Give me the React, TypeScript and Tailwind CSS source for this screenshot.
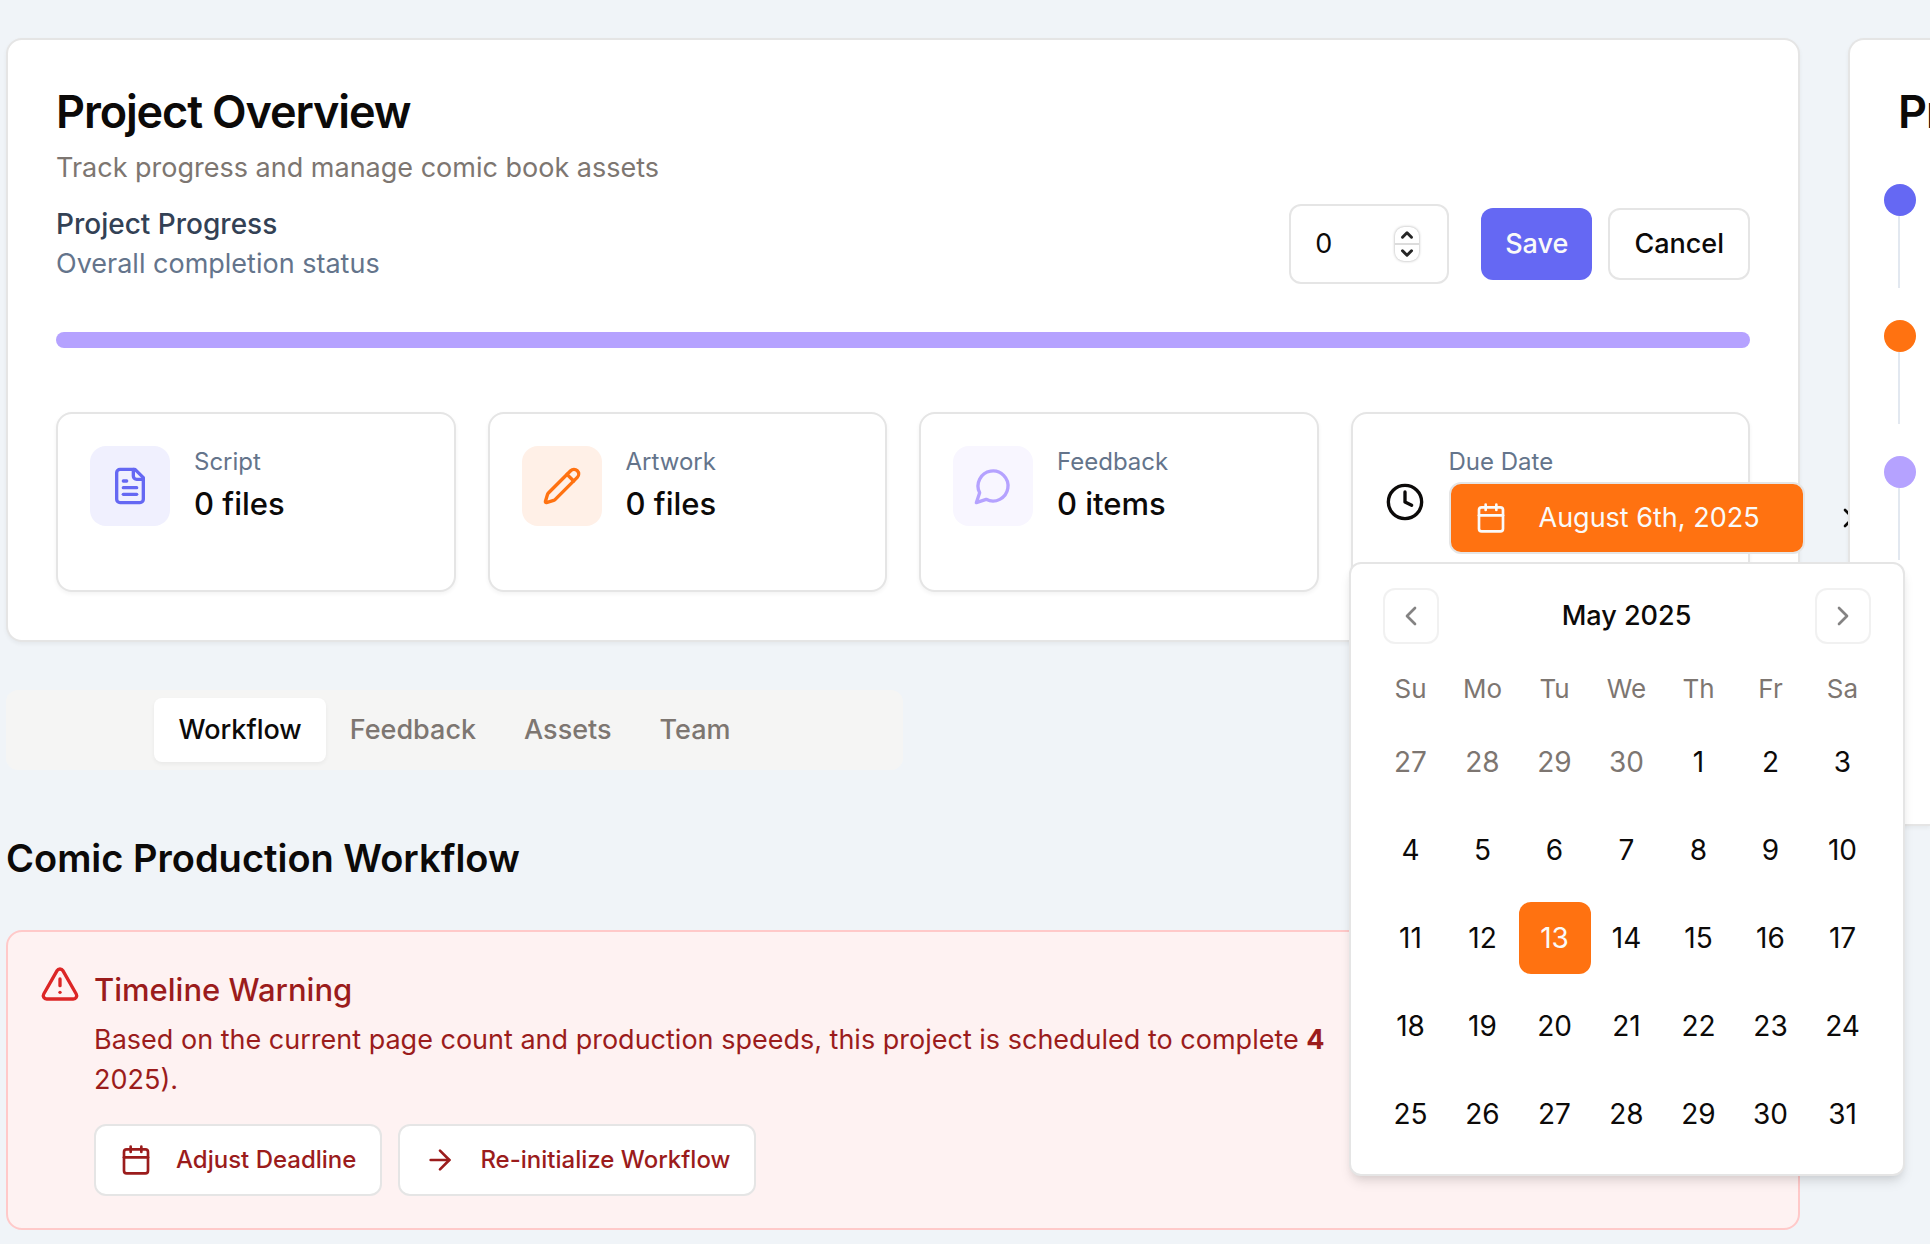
import {
  ArrowRight,
  Calendar as CalendarIcon,
  ChevronDown,
  ChevronLeft,
  ChevronRight,
  ChevronUp,
  Clock,
  Pencil,
  TriangleAlert,
  X,
} from 'lucide-react';
import type { ReactNode } from 'react';

const weekdays = ['Su', 'Mo', 'Tu', 'We', 'Th', 'Fr', 'Sa'];

const weeks = [
  [27, 28, 29, 30, 1, 2, 3],
  [4, 5, 6, 7, 8, 9, 10],
  [11, 12, 13, 14, 15, 16, 17],
  [18, 19, 20, 21, 22, 23, 24],
  [25, 26, 27, 28, 29, 30, 31],
];

function dayStyle(day: number, week: number) {
  if (week === 0 && day > 7) return 'text-[#7d7671]';
  if (day === 13) return 'bg-[#ff7211] text-[#fafaf9]';
  return 'text-[#0c0a09]';
}

function LineIcon({ className, children }: { className: string; children: ReactNode }) {
  return (
    <svg
      viewBox="0 0 24 24"
      fill="none"
      stroke="currentColor"
      strokeWidth={2}
      strokeLinecap="round"
      strokeLinejoin="round"
      aria-hidden="true"
      className={className}
    >
      {children}
    </svg>
  );
}

function DocumentIcon({ className }: { className: string }) {
  return (
    <LineIcon className={className}>
      <path d="M15 2H6a2 2 0 0 0-2 2v16a2 2 0 0 0 2 2h12a2 2 0 0 0 2-2V7Z" />
      <path d="M14 2v4a2 2 0 0 0 2 2h4" />
      <path d="M10 9H8" />
      <path d="M16 13H8" />
      <path d="M16 17H8" />
    </LineIcon>
  );
}

function SpeechIcon({ className }: { className: string }) {
  return (
    <LineIcon className={className}>
      <path d="M7.9 20A9 9 0 1 0 4 16.1L2 22Z" />
    </LineIcon>
  );
}

function MonthPopover() {
  return (
    <div
      role="dialog"
      aria-label="Choose due date"
      className="absolute top-full -left-25 z-20 mt-2 w-max rounded-xl border-2 border-[#e5e5e5] bg-white p-6 shadow-[0_8px_12px_-2px_rgba(0,0,0,0.1),0_4px_8px_-4px_rgba(0,0,0,0.1)]"
    >
      <div className="flex items-center justify-between px-2">
        <button
          type="button"
          aria-label="Previous month"
          className="flex size-14 items-center justify-center rounded-xl border-2 border-[#e5e5e5] opacity-50"
        >
          <ChevronLeft className="size-8" />
        </button>
        <span className="text-[27px] leading-10 font-medium">May 2025</span>
        <button
          type="button"
          aria-label="Next month"
          className="flex size-14 items-center justify-center rounded-xl border-2 border-[#e5e5e5] opacity-50"
        >
          <ChevronRight className="size-8" />
        </button>
      </div>
      <table className="mt-6 border-collapse">
        <thead>
          <tr>
            {weekdays.map((d) => (
              <th key={d} scope="col" className="h-[42px] w-18 p-0 text-[26px] leading-10 font-normal text-[#7d7671]">
                {d}
              </th>
            ))}
          </tr>
        </thead>
        <tbody>
          {weeks.map((week, i) => (
            <tr key={i}>
              {week.map((day) => (
                <td key={day} className="p-0 pt-4">
                  <button
                    type="button"
                    className={`flex size-18 items-center justify-center rounded-xl text-[28px] leading-10 ${dayStyle(day, i)}`}
                  >
                    {day}
                  </button>
                </td>
              ))}
            </tr>
          ))}
        </tbody>
      </table>
    </div>
  );
}

function StatCard({ icon, tint, label, value }: { icon: ReactNode; tint: string; label: string; value: string }) {
  return (
    <div className="flex items-start gap-6 rounded-2xl border-2 border-[#e5e5e5] bg-white p-8 shadow-[0_2px_4px_rgba(0,0,0,0.05)]">
      <div className={`flex size-20 shrink-0 items-center justify-center rounded-2xl ${tint}`}>{icon}</div>
      <div>
        <p className="text-2xl leading-8 text-[#64748b]">{label}</p>
        <p className="text-[31px] leading-13 font-medium">{value}</p>
      </div>
    </div>
  );
}

function DueDateCard() {
  return (
    <div className="flex items-center gap-6 rounded-2xl border-2 border-[#e5e5e5] bg-white p-8 shadow-[0_2px_4px_rgba(0,0,0,0.05)]">
      <Clock className="size-10 shrink-0" />
      <div className="min-w-0 flex-1">
        <p className="text-2xl leading-8 text-[#64748b]">Due Date</p>
        <div className="relative my-1 flex w-max items-center gap-4">
          <button
            type="button"
            className="flex h-18 w-[356px] items-center gap-8 rounded-xl border-2 border-[#e5e5e5] bg-[#ff7211] px-6 text-[27px] leading-10 text-[#fafaf9]"
          >
            <CalendarIcon className="size-8" />
            August 6th, 2025
          </button>
          <button type="button" aria-label="Clear date" className="flex h-18 items-center px-4">
            <X className="size-8" />
          </button>
          <MonthPopover />
        </div>
      </div>
    </div>
  );
}

function ProgressEditor() {
  return (
    <div className="flex items-center justify-between">
      <div className="text-[27px] leading-10">
        <p className="text-[28px] font-medium text-[#334155]">Project Progress</p>
        <p className="text-[#64748b]">Overall completion status</p>
      </div>
      <div className="flex items-center gap-8">
        <div className="flex h-20 w-40 items-center rounded-xl border-2 border-[#e5e5e5] bg-white pr-7 pl-6">
          <input
            type="number"
            defaultValue={0}
            aria-label="Project progress"
            className="w-0 min-w-0 flex-1 [appearance:textfield] bg-transparent text-[27px] leading-10 outline-none"
          />
          <div className="flex h-[34px] w-6 flex-col divide-y-2 divide-[#dcdcdc] rounded-[9px] bg-white text-[#262626] shadow-[0_0_3px_rgba(0,0,0,0.35)]">
            <button type="button" aria-label="Increase" className="flex h-4 flex-1 items-center justify-center">
              <ChevronUp className="size-[18px]" strokeWidth={4} />
            </button>
            <button type="button" aria-label="Decrease" className="flex h-4 flex-1 items-center justify-center">
              <ChevronDown className="size-[18px]" strokeWidth={4} />
            </button>
          </div>
        </div>
        <div className="flex gap-4 text-[27px] leading-10 font-medium">
          <button type="button" className="h-18 rounded-xl bg-[#6568f3] px-6 text-[#fafaf9]">
            Save
          </button>
          <button type="button" className="h-18 rounded-xl border-2 border-[#e5e5e5] bg-white px-6">
            Cancel
          </button>
        </div>
      </div>
    </div>
  );
}

const steps = ['bg-[#6568f3]', 'bg-[#ff7211]', 'bg-[#b5a2ff]'];

export default function App() {
  return (
    <div className="flex min-h-screen items-start gap-12 overflow-x-hidden bg-[#f0f4f8] pt-[38px] pl-1.5 font-['Inter',sans-serif] text-[#0c0a09]">
      <main className="min-w-0 flex-1">
        <section className="rounded-2xl border-2 border-[#e5e5e5] bg-white p-12 shadow-[0_2px_4px_rgba(0,0,0,0.05)]">
          <h2 className="text-[45px] leading-12 font-semibold tracking-tight">Project Overview</h2>
          <p className="mt-3 mb-4 text-[27px] leading-10 text-[#7d7671]">Track progress and manage comic book assets</p>
          <ProgressEditor />
          <div role="progressbar" aria-label="Project progress" aria-valuenow={0} className="mt-12 h-4 rounded-full bg-[#b5a2ff]" />
          <div className="mt-16 grid grid-cols-4 gap-8">
            <StatCard
              icon={<DocumentIcon className="size-10 text-[#6568f3]" />}
              tint="bg-[#f0f0fe]"
              label="Script"
              value="0 files"
            />
            <StatCard
              icon={<Pencil className="size-10 text-[#ff7211]" />}
              tint="bg-[#fff0e7]"
              label="Artwork"
              value="0 files"
            />
            <StatCard
              icon={<SpeechIcon className="size-10 text-[#b5a2ff]" />}
              tint="bg-[#f8f6ff]"
              label="Feedback"
              value="0 items"
            />
            <DueDateCard />
          </div>
        </section>

        <div
          role="tablist"
          className="mt-12 flex h-20 w-1/2 items-center justify-center rounded-xl bg-[#f5f5f4] text-[27px] leading-10 font-medium text-[#7d7671]"
        >
          <button
            type="button"
            role="tab"
            aria-selected="true"
            className="h-16 rounded-lg bg-white px-6 text-[#0c0a09] shadow-[0_2px_4px_rgba(0,0,0,0.05)]"
          >
            Workflow
          </button>
          <button type="button" role="tab" aria-selected="false" className="h-16 px-6">
            Feedback
          </button>
          <button type="button" role="tab" aria-selected="false" className="h-16 px-6">
            Assets
          </button>
          <button type="button" role="tab" aria-selected="false" className="h-16 px-6">
            Team
          </button>
        </div>

        <h2 className="mt-15 mb-11 text-[38px] leading-14 font-semibold">Comic Production Workflow</h2>

        <section role="alert" className="flex gap-3.5 rounded-2xl border-2 border-[#ffc9c9] bg-[#fef2f2] p-8 text-[#9b1c1c]">
          <TriangleAlert className="size-10 shrink-0 text-[#dc2626]" />
          <div className="pt-2">
            <h3 className="text-[31px] leading-9 font-medium">Timeline Warning</h3>
            <p className="mt-3 text-[27px] leading-10">
              Based on the current page count and production speeds, this project is scheduled to complete{' '}
              <strong>4</strong>
              <br />
              2025).
            </p>
            <div className="mt-6 flex gap-4 text-2xl font-medium">
              <button type="button" className="flex h-18 items-center gap-6 rounded-xl border-2 border-[#e5e5e5] bg-white px-6">
                <CalendarIcon className="size-8" />
                Adjust Deadline
              </button>
              <button type="button" className="flex h-18 items-center gap-6 rounded-xl border-2 border-[#e5e5e5] bg-white px-6">
                <ArrowRight className="size-8" />
                Re-initialize Workflow
              </button>
            </div>
          </div>
        </section>
      </main>

      <aside className="relative z-10 w-[82px] shrink-0 overflow-hidden rounded-l-2xl border-2 border-r-0 border-[#e5e5e5] bg-white pt-12 pb-66 pl-12 shadow-[0_2px_4px_rgba(0,0,0,0.05)]">
        <h2 className="text-[45px] leading-12 font-semibold tracking-tight">Pr</h2>
        <ol className="mt-12 -ml-3.5 flex w-8 flex-col gap-8">
          {steps.map((color) => (
            <li key={color} className="flex flex-col">
              <span className={`size-8 rounded-full ${color}`} />
              <span className="ml-3.5 h-18 w-0.5 bg-[#e2e8f0]" />
            </li>
          ))}
        </ol>
      </aside>
    </div>
  );
}
